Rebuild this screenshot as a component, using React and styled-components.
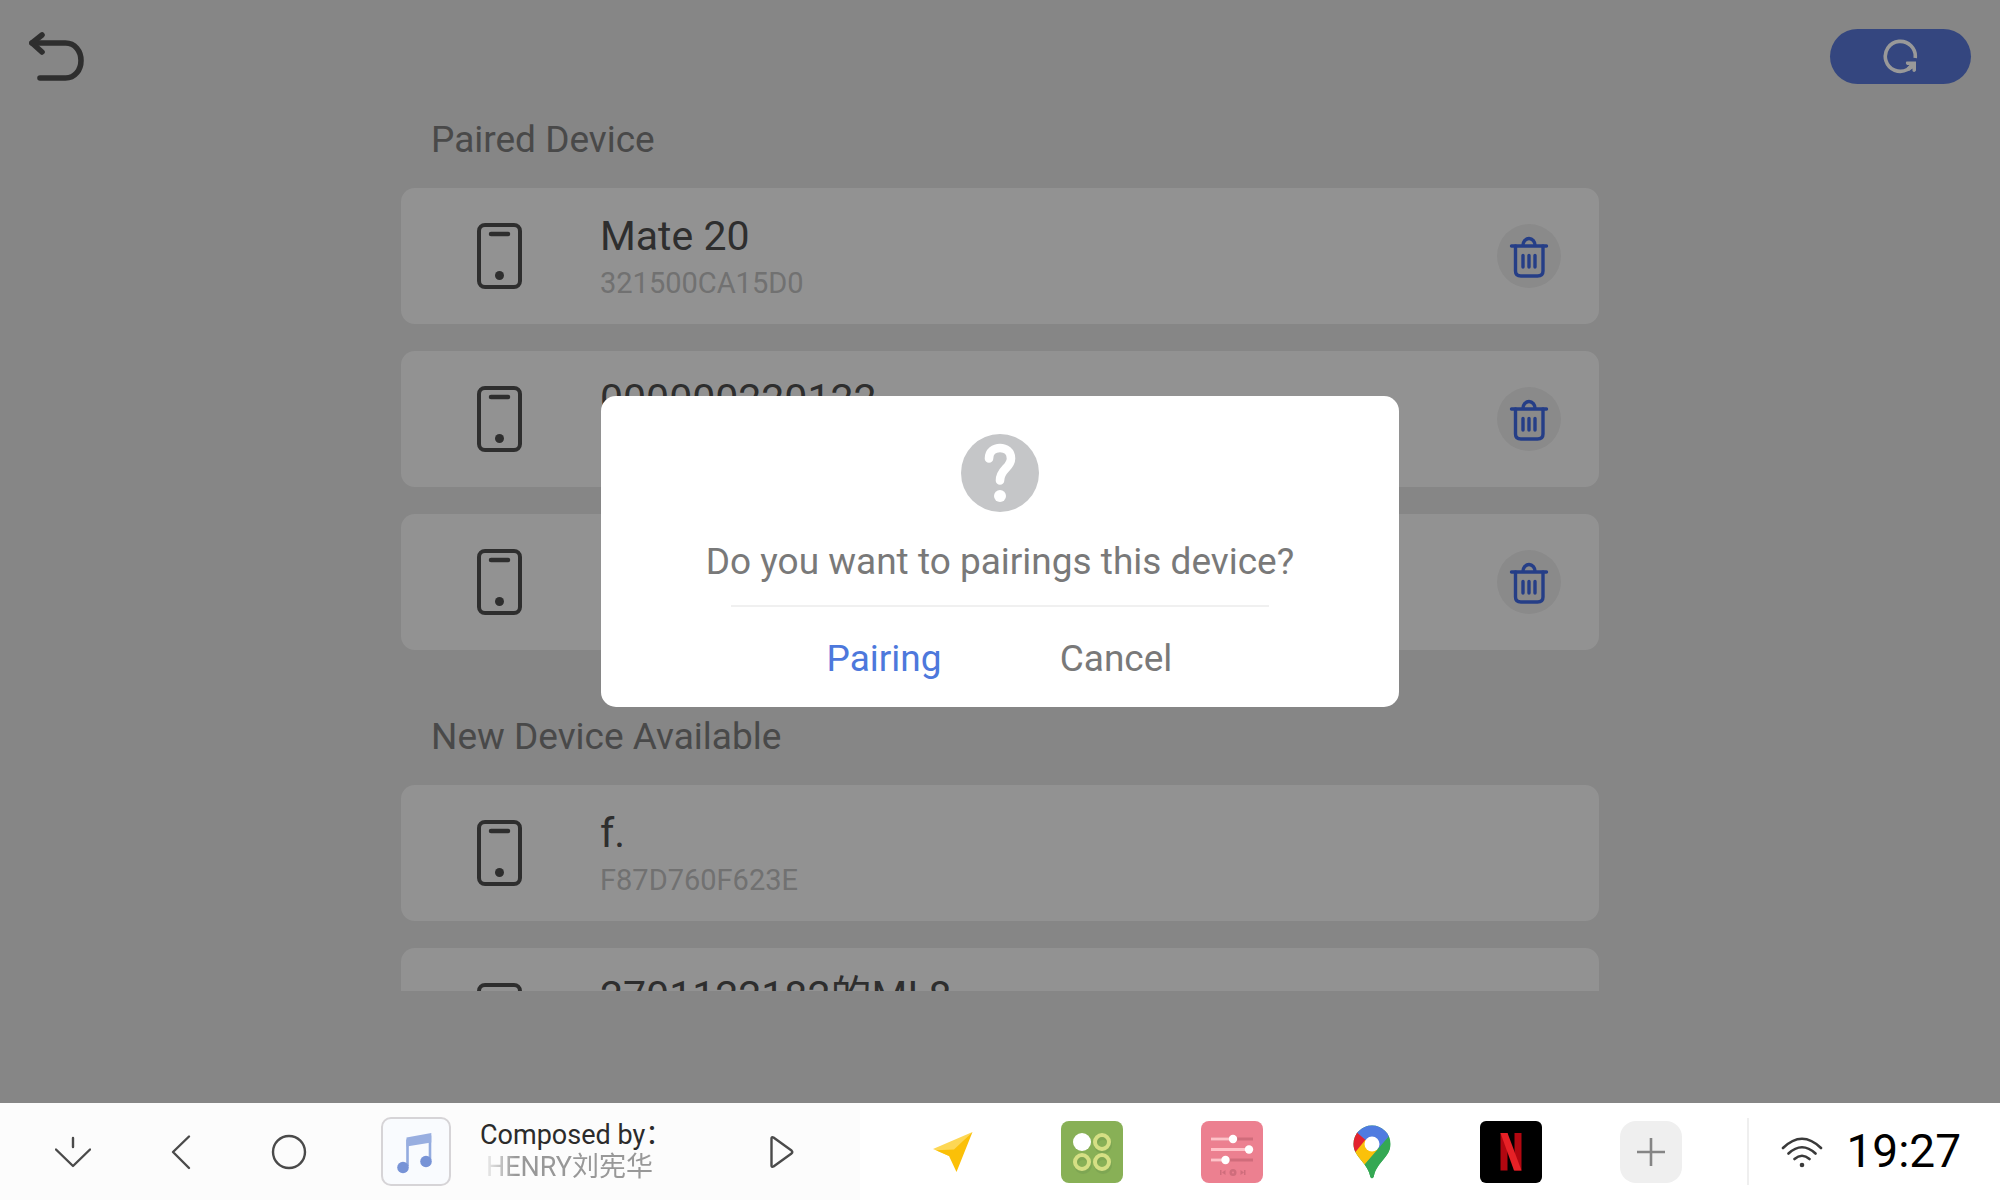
import React from 'react';
import styled, { createGlobalStyle } from 'styled-components';

const GlobalStyle = createGlobalStyle`
    * {
        box-sizing: border-box;
        margin: 0;
        padding: 0;
    }

    body {
        font-family: Roboto, 'Noto Sans CJK SC', sans-serif;
        background: #dfdfdf;
    }

    button {
        border: none;
        background: none;
        font: inherit;
        color: inherit;
        cursor: pointer;
    }

    svg {
        display: block;
    }
`;

const Page = styled.div`
    display: flex;
    flex-direction: column;
    height: 100vh;
`;

const Screen = styled.main`
    position: relative;
    flex: 1;
    min-height: 0;
    display: flex;
    flex-direction: column;
    background: #dfdfdf;
`;

const Header = styled.header`
    display: flex;
    justify-content: space-between;
    align-items: flex-start;
    padding: 29px 29px 34px;
`;

const BackButton = styled.button`
    color: #4e4e4e;
`;

const RefreshButton = styled.button`
    display: flex;
    align-items: center;
    justify-content: center;
    width: 141px;
    height: 55px;
    border-radius: 28px;
    background: #5776d4;
    color: #fff;
`;

const DeviceList = styled.div`
    flex: 1;
    min-height: 0;
    width: 59.9%;
    margin: 0 auto 112px;
    overflow-y: auto;
    scrollbar-width: none;
`;

const Section = styled.section`
    display: flex;
    flex-direction: column;
    gap: 27px;

    &:not(:last-child) {
        margin-bottom: 66px;
    }
`;

const SectionTitle = styled.h2`
    padding-left: 30px;
    font-size: 37px;
    font-weight: 400;
    line-height: 42px;
    color: #7a7a7a;
`;

const Card = styled.article`
    display: grid;
    grid-template-columns: 199px 1fr auto;
    align-items: center;
    height: 136px;
    padding-right: 38px;
    border-radius: 14px;
    background: #f4f4f4;
    color: #4e4e4e;
`;

const PhoneCell = styled.div`
    display: flex;
    justify-content: center;
    padding-right: 2px;
`;

const DeviceInfo = styled.div`
    display: flex;
    flex-direction: column;
    gap: 7px;
    height: 87px;
`;

const DeviceName = styled.h3`
    font-size: 41px;
    font-weight: 400;
    line-height: 47px;
    white-space: nowrap;
`;

const DeviceAddress = styled.p`
    font-size: 29px;
    line-height: 33px;
    color: #bcbcbc;
`;

const DeleteButton = styled.button`
    display: flex;
    align-items: center;
    justify-content: center;
    width: 64px;
    height: 64px;
    border-radius: 50%;
    background: #e6e6e6;
    color: #3f68e2;
`;

const Overlay = styled.div`
    position: absolute;
    inset: 0;
    display: flex;
    align-items: center;
    justify-content: center;
    background: rgba(0, 0, 0, .4);
`;

const Dialog = styled.div`
    display: flex;
    flex-direction: column;
    align-items: center;
    width: 798px;
    max-width: 90%;
    padding: 38px 40px 27px;
    border-radius: 15px;
    background: #fff;
    color: #797979;
    font-size: 37px;
    line-height: 42px;
`;

const Question = styled.p`
    margin-top: 29px;
`;

const DialogLine = styled.hr`
    width: 75%;
    height: 2px;
    margin: 22px 0 31px;
    border: none;
    background: #f0f0f0;
`;

const DialogActions = styled.div`
    display: flex;
    gap: 116px;
`;

const DialogButton = styled.button`
    width: 116px;
    color: ${({ $primary }) => ($primary ? '#4d78dc' : '#797979')};
`;

const NavBar = styled.footer`
    display: flex;
    height: 97px;
    background: #fff;
`;

const NavLeft = styled.div`
    flex: 0 0 43%;
    display: flex;
    align-items: center;
    padding-left: 19px;
    background: #fcfcfc;
    color: #4a4a4a;
`;

const NavButton = styled.button`
    display: flex;
    justify-content: center;
    width: 108px;
`;

const Player = styled.div`
    display: flex;
    align-items: center;
    flex: 1;
    padding: 0 66px 0 38px;
`;

const Cover = styled.div`
    display: flex;
    align-items: center;
    justify-content: center;
    width: 70px;
    height: 69px;
    border: 2px solid #d6d4d7;
    border-radius: 10px;
    background: #f9fbfe;
`;

const Track = styled.div`
    flex: 1;
    margin-left: 29px;
    padding-bottom: 2px;
    font-size: 27px;
    line-height: 32px;
`;

const TrackTitle = styled.p`
    color: #2b2b2b;
`;

const TrackArtist = styled.p`
    width: 174px;
    padding-left: 6px;
    overflow: hidden;
    white-space: nowrap;
    color: #989898;
    mask-image: linear-gradient(to right, transparent, #000 36px);
`;

const AppDock = styled.nav`
    flex: 1;
    display: flex;
    align-items: center;
    padding: 0 27px 0 23px;
`;

const AppButton = styled.button`
    flex: 1;
    display: flex;
    justify-content: center;
`;

const AppTile = styled.span`
    display: flex;
    align-items: center;
    justify-content: center;
    width: 62px;
    height: 62px;
    border-radius: ${({ $radius }) => $radius || 8}px;
    background: ${({ $color }) => $color || 'transparent'};
`;

const Status = styled.div`
    display: flex;
    align-items: center;
    gap: 23px;
    height: 67px;
    margin: 15px 0;
    padding: 0 39px 0 32px;
    border-left: 2px solid #efefef;
`;

const Clock = styled.time`
    padding-bottom: 2px;
    font-size: 46px;
    line-height: 54px;
    color: #000;
`;

const BackIcon = () => (
    <svg width="56" height="56" viewBox="0 0 56 56" fill="none" stroke="currentColor" strokeWidth="5.600" strokeLinecap="round" strokeLinejoin="round">
        <path d="M3 14H36.500C46 14 52 22 52 31.500S46 49 36.500 49H11" />
        <path d="M13 6L3 14L13 23" />
    </svg>
);

const RefreshIcon = () => (
    <svg width="35" height="35" viewBox="0 0 35 35">
        <path d="M32.200 19A15 15 0 1 0 24.500 30.500L28 27" fill="none" stroke="currentColor" strokeWidth="3.600" />
        <path d="M23.500 22.500H33V31.500Q31.500 34 29.500 32V29.500L26 32L24 29L27 26H24Q22 24 23.500 22.500Z" fill="currentColor" />
    </svg>
);

const PhoneIcon = () => (
    <svg width="45" height="66" viewBox="0 0 45 66" fill="none" stroke="currentColor" strokeWidth="4" strokeLinecap="round">
        <rect x="2" y="2" width="41" height="62" rx="6" />
        <path d="M14 11H31" strokeWidth="4.500" />
        <circle cx="22.500" cy="52.500" r="4.500" fill="currentColor" stroke="none" />
    </svg>
);

const TrashIcon = () => (
    <svg width="40" height="44" viewBox="0 0 40 44" fill="none" stroke="currentColor" strokeWidth="3.400" strokeLinecap="round">
        <path d="M2.500 12H37.500M13.800 12A6.200 7.500 0 0 1 26.200 12" />
        <path d="M6.500 12V37Q6.500 42 12 42H28.500Q34 42 34 37V12" />
        <path d="M14 21.500V33M20 21.500V33M26 21.500V33" />
    </svg>
);

const QuestionIcon = () => (
    <svg width="78" height="78" viewBox="0 0 78 78">
        <circle cx="39" cy="39" r="39" fill="#c5c6c8" />
        <path d="M28 24.500C28 10.500 50 10.500 50 24.500C50 34 39 35 39 46.500" fill="none" stroke="#fff" strokeWidth="8.600" strokeLinecap="round" />
        <circle cx="39" cy="62" r="6" fill="#fff" />
    </svg>
);

const LineIcon = ({ children }) => (
    <svg width="36" height="36" viewBox="0 0 36 36" fill="none" stroke="currentColor" strokeWidth="2.400" strokeLinecap="round" strokeLinejoin="round">
        {children}
    </svg>
);

const NoteIcon = () => (
    <svg width="46" height="46" viewBox="0 0 46 46">
        <path d="M14.500 37V11.500L37 8V31" fill="none" stroke="#93abdf" strokeWidth="2.600" />
        <path d="M13.500 8.500L38.300 4V13.500L13.500 17.500Z" fill="#98aee0" />
        <circle cx="10" cy="38.500" r="5.800" fill="#7793d6" />
        <circle cx="33" cy="32.500" r="5.800" fill="#7793d6" />
    </svg>
);

const ArrowIcon = () => (
    <svg width="42" height="42" viewBox="0 0 42 42">
        <path d="M40.500 1L1 18L17 25Z" fill="#fdd754" />
        <path d="M40.500 1L24.500 41L17 25L4 19.300L22 18.500Z" fill="#fbc008" />
    </svg>
);

const RingsIcon = () => (
    <svg width="62" height="62" viewBox="0 0 62 62" fill="none" strokeWidth="4">
        <g stroke="#7ea653">
            <circle cx="42" cy="24" r="7" />
            <circle cx="22" cy="44" r="7" />
            <circle cx="42" cy="44" r="7" />
        </g>
        <g stroke="#d5df84">
            <circle cx="21" cy="21" r="9" fill="#fff" stroke="none" />
            <circle cx="41" cy="21" r="7" />
            <circle cx="21" cy="41" r="7" />
            <circle cx="41" cy="41" r="7" />
        </g>
    </svg>
);

const sliders = [
    { y: 18, knob: 32 },
    { y: 28.5, knob: 48 },
    { y: 39, knob: 24.5 },
];

const SlidersIcon = () => (
    <svg width="62" height="62" viewBox="0 0 62 62">
        {sliders.map(({ y, knob }) => (
            <g key={y}>
                <path d={`M10 ${y}H52`} stroke="#d06c7b" strokeWidth="3" />
                <path d={`M10 ${y}H${knob}`} stroke="#ffc2c8" strokeWidth="3" />
                <circle cx={knob} cy={y} r="4.200" fill="#fff" />
            </g>
        ))}
        <g fill="#cf6d7c">
            <path d="M19 49H20.500V54H19ZM24.500 49V54L21 51.500ZM43 49H44.500V54H43ZM39.500 49V54L43 51.500Z" />
            <circle cx="32" cy="51.500" r="3.500" />
            <circle cx="32" cy="51.500" r="1" fill="#ec8090" />
        </g>
    </svg>
);

const MapPinIcon = () => (
    <svg width="38" height="54" viewBox="0 0 38 54">
        <defs>
            <clipPath id="pin">
                <path d="M19 .5C8.700 .5 .5 8.700 .5 19C.5 32 14 37 17 50.500C17.600 54 20.400 54 21 50.500C24 37 37.500 32 37.500 19C37.500 8.700 29.300 .5 19 .5Z" />
            </clipPath>
        </defs>
        <g clipPath="url(#pin)">
            <path d="M0 0H38V54H0Z" fill="#34a853" />
            <path d="M4.500 7L0 3V28L19 19Z" fill="#e3222e" />
            <path d="M0 30L13 14L25 25L8 44Z" fill="#fbc10a" />
            <path d="M4.500 8L0 4V0H38V10L25 24.500L19 19L12.500 15Z" fill="#4f7be0" />
            <path d="M36.500 10.500L9 42.500L14 54H38Z" fill="#34a853" />
        </g>
        <circle cx="19" cy="19" r="7.500" fill="#fff" />
    </svg>
);

const NetflixLogo = () => (
    <svg width="22" height="38" viewBox="0 0 22 38">
        <rect x=".5" width="7" height="37.500" fill="#b20710" />
        <rect x="14.500" width="7" height="37.500" fill="#b20710" />
        <polygon points=".5,0 7.500,0 21.500,37.500 14,37.500" fill="#e72126" />
    </svg>
);

const WifiIcon = () => (
    <svg width="42" height="32" viewBox="0 0 42 32" fill="none" stroke="#3a3a3a" strokeWidth="2.600" strokeLinecap="round">
        <path d="M2 12Q21 -6.500 40 12M7.500 17.500Q21 5 34.500 17.500M13.500 23Q21 16.500 28.500 23" />
        <circle cx="21" cy="29" r="2.300" fill="#3a3a3a" stroke="none" />
    </svg>
);

const pairedDevices = [
    { id: 1, name: 'Mate 20', address: '321500CA15D0' },
    { id: 2, name: '000000220122' },
    { id: 3 },
];

const newDevices = [
    { id: 4, name: 'f.', address: 'F87D760F623E' },
    { id: 5, name: '2701122182的MI 8' },
];

const Device = ({ name, address, paired }) => (
    <Card>
        <PhoneCell><PhoneIcon /></PhoneCell>
        <DeviceInfo>
            {name && <DeviceName>{name}</DeviceName>}
            {address && <DeviceAddress>{address}</DeviceAddress>}
        </DeviceInfo>
        {paired && <DeleteButton aria-label="Delete device"><TrashIcon /></DeleteButton>}
    </Card>
);

const App = () => {
    return (
        <Page>
            <GlobalStyle />
            <Screen>
                <Header>
                    <BackButton aria-label="Back"><BackIcon /></BackButton>
                    <RefreshButton aria-label="Refresh"><RefreshIcon /></RefreshButton>
                </Header>
                <DeviceList>
                    <Section>
                        <SectionTitle>Paired Device</SectionTitle>
                        {pairedDevices.map((device) => <Device key={device.id} paired {...device} />)}
                    </Section>
                    <Section>
                        <SectionTitle>New Device Available</SectionTitle>
                        {newDevices.map((device) => <Device key={device.id} {...device} />)}
                    </Section>
                </DeviceList>
                <Overlay>
                    <Dialog role="dialog" aria-modal="true" aria-labelledby="pairing-question">
                        <QuestionIcon />
                        <Question id="pairing-question">Do you want to pairings this device?</Question>
                        <DialogLine />
                        <DialogActions>
                            <DialogButton $primary>Pairing</DialogButton>
                            <DialogButton>Cancel</DialogButton>
                        </DialogActions>
                    </Dialog>
                </Overlay>
            </Screen>
            <NavBar>
                <NavLeft>
                    <NavButton aria-label="Hide bar">
                        <LineIcon><path d="M18 4V13M1 15.500L18 32L35 15.500" /></LineIcon>
                    </NavButton>
                    <NavButton aria-label="Previous screen">
                        <LineIcon><path d="M26 2.500L10 18L26 34" /></LineIcon>
                    </NavButton>
                    <NavButton aria-label="Home">
                        <LineIcon><circle cx="18" cy="18" r="16" /></LineIcon>
                    </NavButton>
                    <Player>
                        <Cover><NoteIcon /></Cover>
                        <Track>
                            <TrackTitle>Composed by：</TrackTitle>
                            <TrackArtist>HENRY刘宪华</TrackArtist>
                        </Track>
                        <button aria-label="Play">
                            <svg width="24" height="34" viewBox="0 0 24 34" fill="none" stroke="#4a4a4a" strokeWidth="2.400" strokeLinejoin="round">
                                <path d="M1.500 3.500Q1.500 1.500 3.500 2.500L21.500 15.500Q23 17 21.500 18.500L3.500 31.500Q1.500 32.500 1.500 30.500Z" />
                            </svg>
                        </button>
                    </Player>
                </NavLeft>
                <AppDock>
                    <AppButton aria-label="Navigation"><AppTile><ArrowIcon /></AppTile></AppButton>
                    <AppButton aria-label="Apps"><AppTile $color="#88b056"><RingsIcon /></AppTile></AppButton>
                    <AppButton aria-label="Equalizer"><AppTile $color="#ec8090"><SlidersIcon /></AppTile></AppButton>
                    <AppButton aria-label="Maps"><AppTile><MapPinIcon /></AppTile></AppButton>
                    <AppButton aria-label="Netflix"><AppTile $color="#000" $radius={6}><NetflixLogo /></AppTile></AppButton>
                    <AppButton aria-label="Add app">
                        <AppTile $color="#efefef" $radius={16}>
                            <svg width="28" height="28" viewBox="0 0 28 28" stroke="#858585" strokeWidth="2.600">
                                <path d="M14 0V28M0 14H28" />
                            </svg>
                        </AppTile>
                    </AppButton>
                </AppDock>
                <Status>
                    <WifiIcon />
                    <Clock>19:27</Clock>
                </Status>
            </NavBar>
        </Page>
    );
};

export default App;
